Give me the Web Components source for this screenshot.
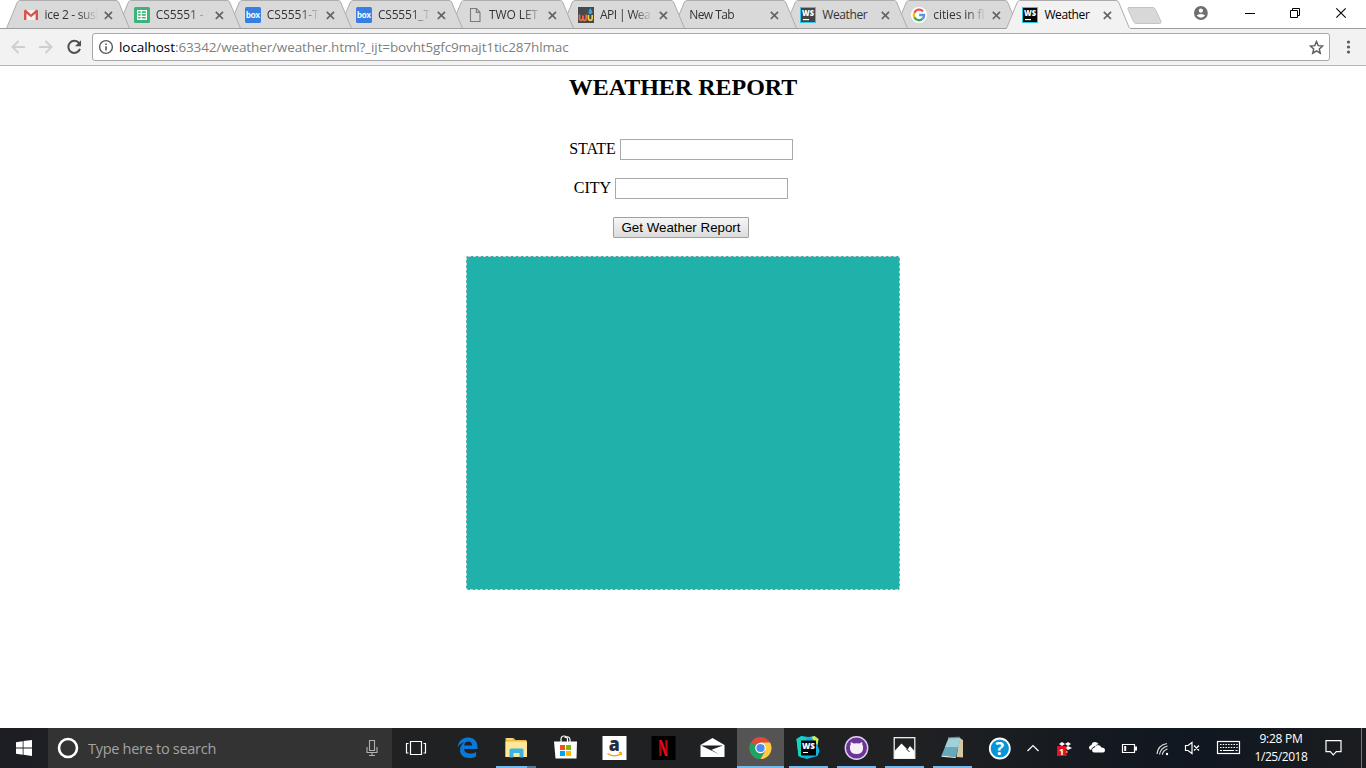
<!DOCTYPE html>
<html lang="en">
<head>
<meta charset="utf-8">
<title>Weather</title>
<style>
html,body{margin:0;height:100%;overflow:hidden;background:#fff}
body{display:flex;flex-direction:column;height:768px;width:1366px}
</style>
</head>
<body>
<tab-strip></tab-strip>
<address-bar></address-bar>
<weather-page></weather-page>
<task-bar></task-bar>
<script>
const UI = '"Open Sans","Noto Sans",sans-serif';
function define(name, html, ready) {
  customElements.define(name, class extends HTMLElement {
    connectedCallback() {
      if (this.shadowRoot) return;
      const root = this.attachShadow({mode: 'open'});
      root.innerHTML = typeof html === 'function' ? html(this) : html;
      if (ready) ready(this, root);
    }
  });
}

/* A single line of text set to a given advance width through its tracking. */
define('fit-text', '<style>:host{display:inline-block;white-space:pre;line-height:inherit}span{display:inline-block}</style><span><slot></slot></span>', (el, root) => {
  const s = root.querySelector('span');
  const w = +el.getAttribute('w');
  if (w) {
    const n = el.textContent.length;
    s.style.letterSpacing = ((w - s.getBoundingClientRect().width) / n) + 'px';
  }
});

const webstorm = `<rect x=".5" y=".5" width="15" height="15" fill="FILL" stroke="#2cc5e8"/><text x="2" y="8.600" font-family="Open Sans,sans-serif" font-size="7.800" font-weight="800" fill="#fff" textLength="12" lengthAdjust="spacingAndGlyphs">WS</text><rect x="3" y="12" width="6" height="1.2" fill="#fff"/>`;
const box = `<rect width="16" height="16" rx="1.5" fill="#3580e2"/><text x="1" y="11" font-family="Lato,sans-serif" font-size="8.5" font-weight="900" fill="#fff" textLength="14" lengthAdjust="spacingAndGlyphs">box</text>`;
const favicons = {
  gmail: `<path d="M2 3h12v10H2z" fill="#f3f1ef"/><path d="M1 13V3.6L2.6 2.6 8 7.4l5.4-4.8L15 3.6V13h-2.4V6.4L8 10.2 3.4 6.4V13z" fill="#d9534a"/>`,
  sheets: `<rect width="16" height="16" rx="1.5" fill="#3fb27c"/><path fill="#fff" d="M3 3h10v10H3z"/><path d="M4.2 4.3h2.4v1.6H4.2zM7.8 4.3h4v1.6h-4zM4.2 7.1h2.4v1.6H4.2zM7.8 7.1h4v1.6h-4zM4.2 9.9h2.4v1.7H4.2zM7.8 9.9h4v1.7h-4z" fill="#3fb27c"/>`,
  box,
  page: `<path d="M3.5 1.5h6l3.5 3.6v9.4H3.5zM9.3 1.8v3.6H13" fill="none" stroke="#7c7c7c" stroke-width="1.1"/>`,
  wu: `<rect width="16" height="16" fill="#48494b"/><path d="M1.500 7.500v3.500q0 2.300 1.700 2.300T4.900 11V8.500 11q0 2.300 1.700 2.300T8.300 11V7.500" stroke="#f26b4c" stroke-width="1.700" fill="none"/><path d="M10.400 8v3.300q0 2 1.900 2t1.900-2V8" stroke="#f6d23e" stroke-width="1.600" fill="none"/><path d="M12.400 1Q14.600 4.300 14.400 5.600t-2 1.700-2-1.700T12.400 1z" fill="#2da9df"/>`,
  ws: webstorm.replace('FILL', '#454545'),
  wsa: webstorm.replace('FILL', '#080808'),
  google: `<circle cx="8" cy="8" r="8" fill="#fff"/><g fill="none" stroke-width="2.300"><path d="M12 4.400A5.200 5.200 0 0 0 3.300 5.700" stroke="#ea5548"/><path d="M3.300 5.700a5.200 5.200 0 0 0 0 4.600" stroke="#fbbc05"/><path d="M3.300 10.300a5.200 5.200 0 0 0 8.300 1.500" stroke="#43a95b"/><path d="M11.600 11.800A5.200 5.200 0 0 0 13.100 8H8.200" stroke="#5a91ee"/></g>`
};

define('browser-tab', el => {
  const on = el.hasAttribute('active'), icon = el.getAttribute('icon');
  return `<style>
  :host{display:flex;position:relative;box-sizing:border-box;flex:0 0 111.100px;height:29px;padding:7px 0 0 16.600px;font:12px/16px ${UI};color:#333}
  .shape{position:absolute;left:0;top:0}
  .ico,.title,.x{position:relative;flex:none}
  .ico{margin-right:6px}
  .title{width:53px;overflow:hidden;white-space:nowrap;-webkit-mask-image:linear-gradient(90deg,#000 ${icon ? 34 : 74}px,transparent ${icon ? 53 : 78}px)}
  .full{-webkit-mask-image:none}
  .x{margin:4px 0 0 6px}
  </style>
  <svg class="shape" width="126" height="29" viewBox="0 0 126 29"><path d="M0 28.500C1 28 1 27 1.500 26L11 3C12 .800 13 .500 14 .500H110C111.500 .500 112 1 113 3L122.500 26C123 27.500 123.500 28.500 125 28.500" fill="${on ? '#f2f2f2' : '#d9d9d9'}" stroke="#adadad"/>${on ? '<path d="M1 28.500H124" stroke="#f2f2f2" stroke-width="1.200"/>' : '<path d="M0 28.500H126" stroke="#9e9e9e"/>'}</svg>
  ${icon ? `<svg class="ico" width="16" height="16">${favicons[icon]}</svg>` : ''}
  <div class="title ${el.textContent === 'Weather' ? 'full' : ''}" style="${icon ? '' : 'width:75px'};${on ? 'color:#000' : ''}"><slot></slot></div>
  <svg class="x" width="9" height="9"><path d="M.8.800l7.200 7.200M8 .800L.8 8" stroke="#626262" stroke-width="1.700"/></svg>`;
});

define('tab-strip', `<style>
  :host{display:flex;height:29px;flex:none;background:linear-gradient(#9e9e9e,#9e9e9e) 0 28px/100% 1px no-repeat #fff;padding-left:6px;box-sizing:border-box;position:relative}
  browser-tab{z-index:var(--z)}
  .new{margin:6px 0 0 9.600px;flex:none}
  .controls{display:flex;margin-left:auto;align-items:flex-start}
  .controls svg{flex:none}
  </style>
  <browser-tab icon="gmail" style="--z:9"><fit-text w="58">ice 2 - sush</fit-text></browser-tab>
  <browser-tab icon="sheets" style="--z:8"><fit-text w="51">CS5551 - </fit-text></browser-tab>
  <browser-tab icon="box" style="--z:7"><fit-text w="52">CS5551-T</fit-text></browser-tab>
  <browser-tab icon="box" style="--z:6"><fit-text w="52">CS5551_T</fit-text></browser-tab>
  <browser-tab icon="page" style="--z:5"><fit-text w="49">TWO LET</fit-text></browser-tab>
  <browser-tab icon="wu" style="--z:4"><fit-text w="50">API | Wea</fit-text></browser-tab>
  <browser-tab style="--z:3"><fit-text w="45">New Tab</fit-text></browser-tab>
  <browser-tab icon="ws" style="--z:2"><fit-text w="45">Weather</fit-text></browser-tab>
  <browser-tab icon="google" style="--z:1"><fit-text w="51">cities in fl</fit-text></browser-tab>
  <browser-tab icon="wsa" active style="--z:10"><fit-text w="45">Weather</fit-text></browser-tab>
  <svg class="new" width="36" height="19"><path d="M1.500 1.500H26Q27.500 1.500 28.500 3.500L34 15.500Q34.500 17.500 32.500 17.500H9Q7.500 17.500 6.500 15.500L1 3.500Q.500 1.500 2 1.500z" fill="#d8d8d8" stroke="#c4c4c4"/></svg>
  <div class="controls"><svg width="190" height="28"><circle cx="24.900" cy="13" r="6.900" fill="#6e6e6e"/><circle cx="24.900" cy="10.700" r="2.100" fill="#fff"/><path d="M20.700 15.600Q21.500 13.900 24.900 13.900T29.100 15.600Q27.500 17.700 24.900 17.700T20.700 15.600z" fill="#fff"/><path d="M69 13.500h10" stroke="#000"/><path d="M114.500 10.500h7v7h-7zM116.500 10.500v-2h7v7h-2" fill="none" stroke="#000"/><path d="M160.300 8.300l9.400 9.400M169.700 8.300l-9.400 9.400" stroke="#000" stroke-width="1.100"/></svg></div>`);

define('address-bar', `<style>
  :host{display:flex;align-items:center;height:37px;flex:none;box-sizing:border-box;background:#f2f2f2;border-bottom:1px solid #b6b6b6;padding-left:10px}
  svg{flex:none}
  .box{display:flex;align-items:center;box-sizing:border-box;width:1238px;height:28px;background:#fff;border:1px solid #a8a8a8;border-radius:3px;margin-left:10px;padding:0 5px 0 5px;font:13.500px/20px ${UI};color:#000}
  .url{margin-left:5px;flex:1;white-space:nowrap}
  .rest{color:#808080}
  </style>
  <svg width="72" height="36"><g fill="none" stroke="#cfcfcf" stroke-width="1.900"><path d="M15 18H2.500M8.500 12L2.500 18l6 6M29 18h12.500M35.500 12l6 6-6 6"/></g><path d="M69.100 14.200A6 6 0 1 0 70 19.900" fill="none" stroke="#505050" stroke-width="2"/><path d="M71 11.200v6h-6z" fill="#505050"/></svg>
  <div class="box"><svg width="16" height="16"><circle cx="8" cy="8" r="6.400" fill="none" stroke="#5a5a5a" stroke-width="1.400"/><path d="M8 7.200v4.200M8 4.400v1.500" stroke="#5a5a5a" stroke-width="1.600"/></svg><div class="url"><fit-text w="56">localhost</fit-text><fit-text w="393.500" class="rest">:63342/weather/weather.html?_ijt=bovht5gfc9majt1tic287hlmac</fit-text></div>
  <svg width="15" height="15"><path d="M7.500 1.500l1.700 4.100 4.500.400-3.400 2.900 1 4.300-3.800-2.300-3.800 2.300 1-4.300L1.300 6l4.500-.400z" fill="none" stroke="#5a5a5a" stroke-width="1.400"/></svg></div>
  <svg width="36" height="28"><g fill="#5a5a5a"><circle cx="18.500" cy="9" r="1.600"/><circle cx="18.500" cy="14" r="1.600"/><circle cx="18.500" cy="19" r="1.600"/></g></svg>`);

define('form-field', `<style>
  :host{display:flex;align-items:center;justify-content:center;height:21px;gap:4px;font:16px/18px "Liberation Serif",serif}
  label{padding-bottom:2px}
  input{box-sizing:border-box;width:173px;height:21px;border:1px solid #a9a9a9;margin:0;padding:1px;background:#fff;outline:0;border-radius:0}
  </style><label><slot></slot></label><input type="text">`);

define('weather-page', `<style>
  :host{display:flex;flex-direction:column;align-items:center;flex:1;background:#fff;color:#000;font-family:"Liberation Serif",serif}
  h2{font-size:24px;line-height:27px;margin:8px 0 0;font-weight:bold}
  form{display:flex;flex-direction:column;align-items:center;gap:18px;margin-top:38px;padding-right:4px}
  button{box-sizing:border-box;width:136px;height:21px;border:1px solid #a0a0a0;border-radius:1px;background:linear-gradient(#f6f6f6,#dcdcdc);font:13.333px/17px "Liberation Sans",sans-serif;padding:0;white-space:nowrap;color:#000}
  .report{box-sizing:border-box;width:434px;height:334px;margin-top:18px;border:1px dashed #d3d3d3;border-radius:2px;background:#20b2aa}
  </style>
  <h2>WEATHER REPORT</h2>
  <form><form-field>STATE</form-field><form-field>CITY</form-field><button type="button">Get Weather Report</button></form>
  <div class="report"></div>`);

const apps = {
  edge: `<path d="M4 13.500C5 6 10 3.500 14.500 3.500 20.500 3.500 24 7.700 24 12.500v2.600H10.500c.3 3 2.900 4.400 6.100 4.400 2.400 0 4.400-.6 6-1.600v4.500c-1.800 1-4.200 1.600-7 1.600-6 0-9.100-3.300-9.100-8 0-3.500 2-6.300 4.800-7.700C7.700 9.100 5.400 11 4 13.500zm6.700-1.900h7.900C18.600 9 17 7.600 14.800 7.600s-3.700 1.500-4.100 4z" fill="#0a78d7"/>`,
  files: `<path d="M3 5V4h8l2 2h11v17H3z" fill="#e9b949"/><path d="M3 7.500h21.500V23H3z" fill="#ffe796"/><path d="M4 5h6" stroke="#fff3c2"/><path d="M7 23.500V16q0-1.500 1.500-1.500h11q1.500 0 1.500 1.500v7.500h-4V19h-6v4.500z" fill="#3ab3e8"/>`,
  store: `<path d="M9.500 8V5.500Q9.500 2 12.500 2t3.500 3.500V8M13 3.500q5-2 5.500 2V8" fill="none" stroke="#fff" stroke-width="1.200"/><path d="M2.500 7.500h23l-.5 17H4z" fill="#fff"/><path d="M8.500 11h5v5h-5z" fill="#f25022"/><path d="M14.500 11h5v5h-5z" fill="#7fba00"/><path d="M8.500 17h5v5h-5z" fill="#00a4ef"/><path d="M14.500 17h5v5h-5z" fill="#ffb900"/>`,
  amazon: `<rect x="2" y="2" width="24" height="24" fill="#fff"/><text x="8.300" y="17.300" font-family="Open Sans,sans-serif" font-weight="800" font-size="19" fill="#222f3e" textLength="11" lengthAdjust="spacingAndGlyphs">a</text><path d="M7 19.500q7 4.500 13 .5M18.500 18.700q3-1 2.200 2.500" fill="none" stroke="#ff9900" stroke-width="1.400"/>`,
  netflix: `<rect x="2" y="2" width="24" height="24" fill="#000"/><path d="M11 6v16M17 6v16" stroke="#b1060f" stroke-width="2.400"/><path d="M9.800 6h2.600l5.800 16h-2.600z" fill="#e50914"/>`,
  mail: `<path d="M2 11L14 4l12 7v12H2z" fill="#fff"/><path d="M2.500 11.500h22L13 15.700l7.500 4.500z" fill="#202124"/>`,
  chrome: `<circle cx="14" cy="14" r="11" fill="#dd4b3e"/><path d="M14 14L4.470 8.500A11 11 0 0 0 14 25l4.760-8.200z" fill="#1da462"/><path d="M14 25a11 11 0 0 0 9.500-16.500H14L18.760 16.800z" fill="#ffcd41"/><circle cx="14" cy="14" r="5.300" fill="#fff"/><circle cx="14" cy="14" r="4.100" fill="#4c8bf5"/>`,
  storm: `<path d="M2 5L7 2l7 1 6-1 4 3-1 6 2 6-2 5-11 3L4 22z" fill="#10b4e4"/><path d="M2 5L7 2l5 2-4 20-4-2z" fill="#15d4c0"/><path d="M17 3l3-1 4 3-1 6-3-3z" fill="#d9e84d"/><rect x="6.500" y="6.500" width="15" height="15" fill="#050505"/><text x="7.500" y="14.500" font-family="Open Sans,sans-serif" font-size="9" font-weight="800" fill="#fff" textLength="13" lengthAdjust="spacingAndGlyphs">WS</text><path d="M8.500 18.500h5" stroke="#fff" stroke-width="1.200"/>`,
  github: `<circle cx="14" cy="14" r="11.200" fill="#6b3599" stroke="#dfd2ea" stroke-width="1.400"/><path d="M7.500 15Q7 12 8.200 10.500L8.300 8l3 1.600q2.700-.5 5.400 0l3-1.600.1 2.500Q21 12 20.500 15 20 20 14 20T7.500 15z" fill="#f5eff8"/>`,
  photos: `<rect x="3.700" y="3.700" width="20.600" height="20.600" fill="#202124" stroke="#fff" stroke-width="1.200"/><path d="M4 17l7-7.500 6 6 2.500-3.500L24 17v7.300H4z" fill="#fff"/><path d="M16 15l3 3" stroke="#202124"/>`,
  notepad: `<path d="M21 4l3.500 2v17.500L18 23z" fill="#d6c6a3"/><path d="M10 4.500l12-.5-4.500 19L3 21.500z" fill="#65a9ba"/><path d="M10 4.500l12-.5-2 9L6.500 13z" fill="#a0d0d8"/><path d="M3 21.500l14.500 1.500-.5 1L3 22.700z" fill="#e5f2f4"/><path d="M10 4l12-.6" stroke="#cfd8da" stroke-dasharray="1 1" stroke-width="1.600"/>`,
  help: `<circle cx="13.300" cy="14.500" r="10" fill="#0795da" stroke="#fff" stroke-width="1.800"/><text x="13.300" y="21" text-anchor="middle" font-family="Open Sans,sans-serif" font-size="18" font-weight="bold" fill="#fff">?</text>`
};

define('app-button', el => `<style>
  :host{display:flex;position:relative;flex:0 0 48px;height:40px;align-items:center;justify-content:center}
  :host([pinned]){flex-basis:49px}
  :host([current]){background:linear-gradient(#545455,#545455) 0 0/47px 100% no-repeat}
  .bar{position:absolute;bottom:0;left:4px;width:39px;height:2px;background:#76b9ed}
  :host([current]) .bar{left:0;width:47px}
  :host([multi]) .bar{width:40px;background:linear-gradient(90deg,#76b9ed 31px,#51799a 31px)}
  svg{transform:translateX(-.5px)}
  </style><svg width="28" height="28" viewBox="0 0 28 28">${apps[el.getAttribute('app')]}</svg>${el.hasAttribute('open') ? '<div class="bar"></div>' : ''}`);

define('system-tray', `<style>
  :host{display:flex;flex:1;height:40px;align-items:center;color:#fff;font:12px/18px ${UI}}
  svg{flex:none}
  .clock{display:flex;flex-direction:column;align-items:center;width:60px;margin-left:6px;padding-bottom:1px}
  .note{margin-left:13px}
  </style>
  <svg width="220" height="40"><g transform="translate(-1025)" fill="none" stroke="#fff" stroke-width="1.200">
  <path d="M1027.500 23l5.500-5.500 5.500 5.500"/>
  <path d="M1059 16l3-2 3 2-3 2zM1065 16l3-2 3 2-3 2zM1065 20l3-2 4 2-4 2zM1062 24l3-2 3 2-3 2z" fill="#fff" stroke="none"/><rect x="1057" y="18" width="9.500" height="10" fill="#e81123" stroke="none"/><text x="1059" y="26.500" stroke="none" fill="#fff" font-family="Open Sans,sans-serif" font-weight="bold" font-size="9">1</text>
  <path d="M1091 22q-2-.5-2-2.500t2.500-2.500q.5-3 3.500-3 2 0 3.500 2-2 .5-3 2-3 .5-4.500 4z" fill="#fff" stroke="none"/><path d="M1094 24.500q-2-.5-2-2.500t2.500-2.500q1-2.500 3.500-2.500t3.500 2.500q3.500 0 3.500 2.500t-2 2.500z" fill="#fff" stroke="none"/>
  <path d="M1122.500 16.500h12v8h-12z"/><path d="M1136 18.500v4M1125.200 18v5" stroke-width="2"/>
  <path d="M1157 26Q1158 17 1167 15.500M1159.500 26.500Q1160.500 20 1167.500 18M1162.300 26.700Q1163 22.500 1167.500 21" stroke="#ddd"/><circle cx="1167" cy="26" r="1.200" fill="#fff" stroke="none"/>
  <path d="M1185.500 17.500h2.500l4-3v11l-4-3h-2.500zM1194 17.500l5 5M1199 17.500l-5 5"/>
  <rect x="1217.500" y="13.500" width="22" height="12"/><path d="M1220 16.500h18M1220 19.500h18" stroke-dasharray="1.500 1.200"/><path d="M1220 22.500h2M1223 22.500h11M1235.500 22.500h2"/>
  </g></svg>
  <div class="clock"><fit-text w="43">9:28 PM</fit-text><fit-text w="53">1/25/2018</fit-text></div>
  <svg class="note" width="40" height="40"><path d="M.7 12.600h15v11H11l-3 3.300-3-3.300H.7z" transform="translate(1.300)" fill="none" stroke="#fff" stroke-width="1.200"/><path d="M37.500 0v40" stroke="#777"/></svg>`);

define('task-bar', `<style>
  :host{display:flex;align-items:center;height:40px;flex:none;background:linear-gradient(90deg,#1c1e23,#202123 200px,#202123 900px,#171b20 1060px,#101720 1200px,#1b1d20);overflow:hidden}
  svg{flex:none}
  .search{display:flex;align-items:center;box-sizing:border-box;width:344px;height:40px;background:#333;padding:0 13px 0 9px;font:14.500px/20px ${UI};color:#a3a3a3}
  .search fit-text{margin-left:9px;flex:1;padding-top:2px}
  </style>
  <svg width="48" height="40"><path d="M16 14.200l6.700-1v6.300H16zM23.500 13.100l8.500-1.200v7.600h-8.500zM16 20.400h6.700v6.400l-6.700-1zM23.500 20.400H32V28l-8.500-1.200z" fill="#fff"/></svg>
  <div class="search"><svg width="22" height="22"><circle cx="11" cy="11" r="9" fill="none" stroke="#fff" stroke-width="2.600"/></svg><fit-text w="128">Type here to search</fit-text><svg width="14" height="18"><path d="M4.500 1.500h5v10h-5zM2 8v5.500h10V8M7 13.500v3M4 16.500h6" fill="none" stroke="#b0b0b0" stroke-width="1.100"/></svg></div>
  <svg width="51" height="40"><path d="M18.500 13.500h11v13h-11zM16.500 15.500h-2v9.500h2M31.500 15.500h2v9.500h-2" fill="none" stroke="#fff" stroke-width="1.200"/></svg>
  <app-button pinned app="edge"></app-button><app-button pinned app="files" open multi></app-button><app-button pinned app="store"></app-button><app-button pinned app="amazon"></app-button><app-button pinned app="netflix"></app-button><app-button pinned app="mail"></app-button><app-button app="chrome" open current></app-button><app-button app="storm" open></app-button><app-button app="github" open></app-button><app-button app="photos" open></app-button><app-button app="notepad" open></app-button><app-button app="help"></app-button>
  <system-tray></system-tray>`);
</script>
</body>
</html>
